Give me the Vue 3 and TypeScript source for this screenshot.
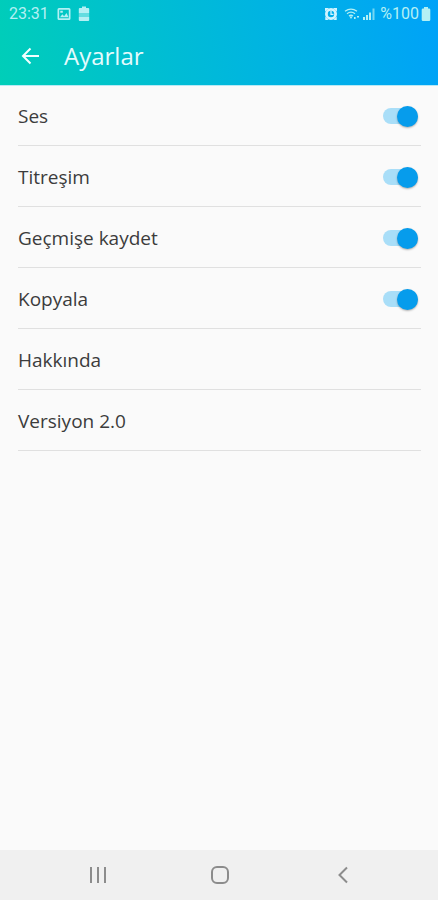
<script setup lang="ts">
import { ref } from 'vue'

interface Setting {
  id: string
  label: string
  on: boolean
}

const settings = ref<Setting[]>([
  { id: 'sound', label: 'Ses', on: true },
  { id: 'vibration', label: 'Titreşim', on: true },
  { id: 'history', label: 'Geçmişe kaydet', on: true },
  { id: 'copy', label: 'Kopyala', on: true },
])
</script>

<template>
  <div class="screen">
    <header class="top">
      <div class="status">
        <span class="clock">23:31</span>
        <svg class="picture" width="14" height="14" viewBox="0 0 14 14" aria-hidden="true">
          <path fill-rule="evenodd" d="M2 1h10a1.500 1.500 0 0 1 1.500 1.500v9A1.500 1.500 0 0 1 12 13H2A1.500 1.500 0 0 1 .5 11.500v-9A1.500 1.500 0 0 1 2 1zM2.200 2.700v8.600h9.600V2.700zM3 10.300l2.400-3 1.700 1.900L9.500 6l2 4.300zM3.300 3.800h2.500v2H3.300z" />
        </svg>
        <svg class="battery-saver" width="12" height="16" viewBox="0 0 12 16" aria-hidden="true">
          <path d="M4 .5h4V2h2.200q1 0 1 1v4H.8V3q0-1 1-1H4zM.8 11h10.400v3q0 1-1 1H1.800q-1 0-1-1z" />
          <path d="M.8 7h10.400v4H.8z" opacity=".55" />
        </svg>
        <span class="spacer"></span>
        <svg class="alarm" width="14" height="14" viewBox="0 0 14 14" aria-hidden="true">
          <path d="M1 4.500V1h4zM13 4.500V1H9zM1.300 13v-3.500L4.500 13zM12.700 13v-3.500L9.500 13z" />
          <path fill-rule="evenodd" d="M7 1a6 6 0 1 0 0 12A6 6 0 0 0 7 1zM7 3.800a3.200 3.200 0 1 1 0 6.400 3.200 3.200 0 0 1 0-6.400z" />
          <path class="line" d="M7 4v3.300h2.500" />
        </svg>
        <svg class="wifi" width="17" height="14" viewBox="0 0 17 14" aria-hidden="true">
          <path class="line" d="M1 4.300q6-4.300 12 0M3 6.700q4-3 8 0M5 9q2-1.500 4 0" />
          <path d="M5.500 9.500h3L7 12zM10 10h1.600v2H10zM13 9h2v1.500h-2z" />
        </svg>
        <svg class="signal" width="14" height="14" viewBox="0 0 14 14" aria-hidden="true">
          <path d="M1 10h2v3H1zM4 8h2v5H4zM7 5.500h2V13H7z" />
          <path d="M10.500 1.500h2V13h-2z" opacity=".65" />
        </svg>
        <span class="percent">%100</span>
        <svg class="battery" width="10" height="14" viewBox="0 0 10 14" aria-hidden="true">
          <path d="M3 0h4v1.500h1q1.300 0 1.300 1.300v9.900q0 1.300-1.300 1.300H2Q.7 14 .7 12.700V2.800Q.7 1.500 2 1.500h1z" />
        </svg>
      </div>
      <div class="bar">
        <button class="back" type="button" aria-label="Geri">
          <svg width="20" height="20" viewBox="0 0 20 20" aria-hidden="true">
            <path d="M19 10H3M10.500 2.500 3 10l7.500 7.500" />
          </svg>
        </button>
        <h1>Ayarlar</h1>
      </div>
    </header>

    <main class="list">
      <label v-for="item in settings" :key="item.id" class="row" :for="item.id">
        <span>{{ item.label }}</span>
        <input :id="item.id" v-model="item.on" class="switch" type="checkbox" role="switch" />
      </label>
      <button class="row" type="button">Hakkında</button>
      <div class="row">Versiyon 2.0</div>
    </main>

    <nav class="system">
      <button type="button" aria-label="Son uygulamalar">
        <svg width="20" height="20" viewBox="0 0 20 20" aria-hidden="true">
          <path d="M3 2v16M10 2v16M17 2v16" />
        </svg>
      </button>
      <button type="button" aria-label="Ana ekran">
        <svg width="20" height="20" viewBox="0 0 20 20" aria-hidden="true">
          <rect x="2" y="2" width="16" height="16" rx="5" />
        </svg>
      </button>
      <button type="button" aria-label="Geri dön">
        <svg width="20" height="20" viewBox="0 0 20 20" aria-hidden="true">
          <path d="M14 2.500 6.500 10l7.500 7.500" />
        </svg>
      </button>
    </nav>
  </div>
</template>

<style>
body {
  margin: 0;
  background: #fafafa;
}
</style>

<style scoped>
.screen {
  display: flex;
  flex-direction: column;
  min-height: 100vh;
  background: #fafafa;
  color: #3c3c3c;
  font-family: "Open Sans", "Noto Sans", sans-serif;
}

button {
  margin: 0;
  padding: 0;
  border: 0;
  background: none;
  color: inherit;
  font: inherit;
  text-align: left;
  cursor: pointer;
}

.top {
  background: linear-gradient(80deg, #00ceb8 0%, #00bdd4 38%, #00b1e6 68%, #00a2f8 100%);
  box-shadow: 0 1px #b8e9f5;
  color: #e4fbfd;
}

.status {
  display: flex;
  align-items: center;
  height: 28px;
  padding: 0 7px 0 9px;
  font-family: Roboto, sans-serif;
  font-size: 16px;
  line-height: 28px;
  color: #b4f0f4;
}

.status svg {
  flex: none;
  fill: currentColor;
}

.status .line {
  fill: none;
  stroke: currentColor;
  stroke-width: 1.3;
}

.picture {
  margin-left: 8px;
}

.battery-saver {
  margin-left: 7px;
}

.spacer {
  flex: 1;
}

.alarm {
  color: #d0f4ff;
}

.wifi {
  margin: 0 1px 0 6px;
}

.signal {
  margin-right: 4px;
}

.battery {
  margin-left: 2px;
}

.bar {
  display: flex;
  align-items: center;
  gap: 24px;
  box-sizing: border-box;
  height: 57px;
  padding: 0 20px 1px;
}

.back {
  display: flex;
}

.back svg {
  fill: none;
  stroke: #f2ffff;
  stroke-width: 2;
}

h1 {
  margin: 0;
  font-size: 24px;
  font-weight: 400;
  line-height: 32px;
}

.list {
  display: flex;
  flex: 1;
  flex-direction: column;
  padding: 0 17px 0 18px;
}

.row {
  display: flex;
  align-items: center;
  justify-content: space-between;
  box-sizing: border-box;
  height: 61px;
  padding-top: 2px;
  border-bottom: 1px solid #e0e0e0;
  font-size: 19px;
  line-height: 28px;
}

.switch {
  display: flex;
  align-items: center;
  justify-content: flex-end;
  width: 35px;
  height: 16px;
  margin: 0 3px 0 0;
  border-radius: 8px;
  appearance: none;
  background: #d0d0d0;
  cursor: pointer;
}

.switch::before {
  width: 21px;
  height: 21px;
  margin-right: 14px;
  border-radius: 50%;
  background: #f5f5f5;
  box-shadow: 0 1px 2px rgb(0 0 0 / 30%);
  content: "";
}

.switch:checked {
  background: #a9def8;
}

.switch:checked::before {
  margin-right: 0;
  background: #069cec;
}

.system {
  display: grid;
  grid-template-columns: repeat(3, 1fr);
  height: 50px;
  padding: 0 34px 0 37px;
  background: #f0f0f0;
}

.system button {
  display: flex;
  align-items: center;
  justify-content: center;
}

.system svg {
  fill: none;
  stroke: #8c8c8c;
  stroke-width: 2;
}
</style>
